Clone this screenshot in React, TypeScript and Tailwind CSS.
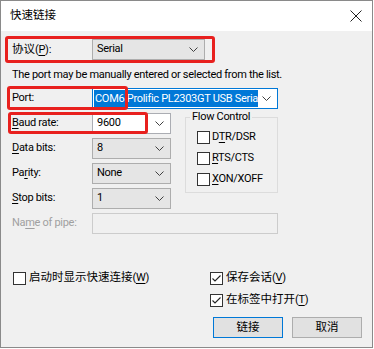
import React from "react";

const FONT = { fontFamily: 'Roboto, "Noto Sans CJK SC", sans-serif' };

const Chevron = () => (
  <svg width="9" height="5" viewBox="0 0 9 5" className="block">
    <path d="M0.5 0.5 L4.5 4.5 L8.5 0.5" fill="none" stroke="#404040" strokeWidth="1" />
  </svg>
);

const U = ({ children }: { children: React.ReactNode }) => <span className="underline underline-offset-[2px]">{children}</span>;
const Z = ({ children }: { children: React.ReactNode }) => <span className="text-[11.5px] tracking-normal">{children}</span>;

function GrayCombo({ value, width }: { value: string; width: string }) {
  return (
    <div className={`${width} h-[21px] bg-[#e5e5e5] border border-[#adadad] flex items-center pl-[4px] pr-[6px] justify-between`}>
      <span>{value}</span>
      <Chevron />
    </div>
  );
}

function CheckBox({ checked }: { checked?: boolean }) {
  return (
    <div className="w-[13px] h-[13px] border border-[#333] bg-white flex items-center justify-center shrink-0">
      {checked && (
        <svg width="11" height="11" viewBox="0 0 11 11">
          <path d="M1.5 5.5 L4 8 L9.5 2.5" fill="none" stroke="#222" strokeWidth="1.1" />
        </svg>
      )}
    </div>
  );
}

function Row({ label, children }: { label: React.ReactNode; children: React.ReactNode }) {
  return (
    <div className="flex items-center h-[21px]">
      <div className="w-[80px]">{label}</div>
      {children}
    </div>
  );
}

export default function App() {
  return (
    <div className="w-[374px] h-[349px] bg-white relative text-[11px] tracking-[-0.3px] text-black" style={FONT}>
      <div className="w-[373px] h-[348px] border border-[#8a8a8a] flex flex-col">
        {/* title bar */}
        <div className="h-[30px] bg-white flex items-center justify-between pl-[9px] pr-[8px] shrink-0">
          <Z>快速链接</Z>
          <svg width="12" height="12" viewBox="0 0 12 12" className="mr-[2px]">
            <path d="M0.5 0.5 L11.5 11.5 M11.5 0.5 L0.5 11.5" stroke="#222" strokeWidth="1" />
          </svg>
        </div>
        {/* body */}
        <div className="flex-1 bg-[#f0f0f0] pl-[11px] pt-[8px] flex flex-col">
          <Row label={<span><Z>协议</Z>(<U>P</U>)<Z>:</Z></span>}>
            <GrayCombo value="Serial" width="w-[113px]" />
          </Row>
          <div className="mt-[6px] h-[18px] flex items-center">The port may be manually entered or selected from the list.</div>
          <div className="mt-[4px]">
            <Row label={<span>Port:</span>}>
              <div className="w-[186px] h-[21px] bg-white border border-[#0078d7] flex items-center pl-[1px] pr-[6px]">
                <div className="w-[164px] h-[17px] bg-[#0078d7] text-white overflow-hidden whitespace-nowrap leading-[17px] pl-[1px]">
                  COM6 Prolific PL2303GT USB Serial (COM6)
                </div>
                <div className="flex-1 flex justify-end">
                  <Chevron />
                </div>
              </div>
            </Row>
          </div>
          <div className="flex mt-[4px]">
            <div className="flex flex-col gap-[4px]">
              <Row label={<span><U>B</U>aud rate:</span>}>
                <div className="w-[79px] h-[21px] bg-white border border-[#abadb3] flex items-center justify-between pl-[4px] pr-[6px]">
                  <span>9600</span>
                  <Chevron />
                </div>
              </Row>
              <Row label={<span><U>D</U>ata bits:</span>}>
                <GrayCombo value="8" width="w-[79px]" />
              </Row>
              <Row label={<span>Pa<U>r</U>ity:</span>}>
                <GrayCombo value="None" width="w-[79px]" />
              </Row>
              <Row label={<span><U>S</U>top bits:</span>}>
                <GrayCombo value="1" width="w-[79px]" />
              </Row>
            </div>
            <div className="ml-[14px] mt-[4px] w-[93px] h-[76px] border border-[#dcdcdc] relative">
              <div className="absolute left-[4px] -top-[9px] bg-[#f0f0f0] px-[2px] leading-[16px]">Flow Control</div>
              <div className="flex flex-col pl-[11px] pt-[12px] gap-[7px]">
                <div className="flex items-center gap-[2px] h-[14px]"><CheckBox /><span>D<U>T</U>R/DSR</span></div>
                <div className="flex items-center gap-[2px] h-[14px]"><CheckBox /><span><U>R</U>TS/CTS</span></div>
                <div className="flex items-center gap-[2px] h-[14px]"><CheckBox /><span><U>X</U>ON/XOFF</span></div>
              </div>
            </div>
          </div>
          <div className="mt-[4px]">
            <Row label={<span className="text-[#a0a0a0]">Na<U>m</U>e of pipe:</span>}>
              <div className="w-[186px] h-[21px] border border-[#cccccc] bg-[#f0f0f0]" />
            </Row>
          </div>
          <div className="flex mt-[36px]">
            <div className="w-[198px] flex items-center gap-[3px] h-[16px] pl-[1px]">
              <CheckBox />
              <span><Z>启动时显示快速连接</Z>(<U>W</U>)</span>
            </div>
            <div className="flex flex-col gap-[6px]">
              <div className="flex items-center gap-[3px] h-[16px]"><CheckBox checked /><span><Z>保存会话</Z>(<U>V</U>)</span></div>
              <div className="flex items-center gap-[3px] h-[16px]"><CheckBox checked /><span><Z>在标签中打开</Z>(<U>T</U>)</span></div>
            </div>
          </div>
          <div className="flex justify-end gap-[9px] mt-[9px] pr-[10px]">
            <div className="w-[70px] h-[21px] bg-[#e1e1e1] border border-[#0078d7] flex items-center justify-center"><Z>链接</Z></div>
            <div className="w-[70px] h-[21px] bg-[#e1e1e1] border border-[#adadad] flex items-center justify-center"><Z>取消</Z></div>
          </div>
        </div>
      </div>
      {/* red highlight boxes */}
      <div className="absolute left-[5px] top-[36px] w-[210px] h-[27px] border-[3px] border-[#e8201e] rounded-[3px]" />
      <div className="absolute left-[7px] top-[86px] w-[121px] h-[24px] border-[3px] border-[#e8201e] rounded-[3px]" />
      <div className="absolute left-[8px] top-[112px] w-[140px] h-[22px] border-[3px] border-[#e8201e] rounded-[3px]" />
    </div>
  );
}
